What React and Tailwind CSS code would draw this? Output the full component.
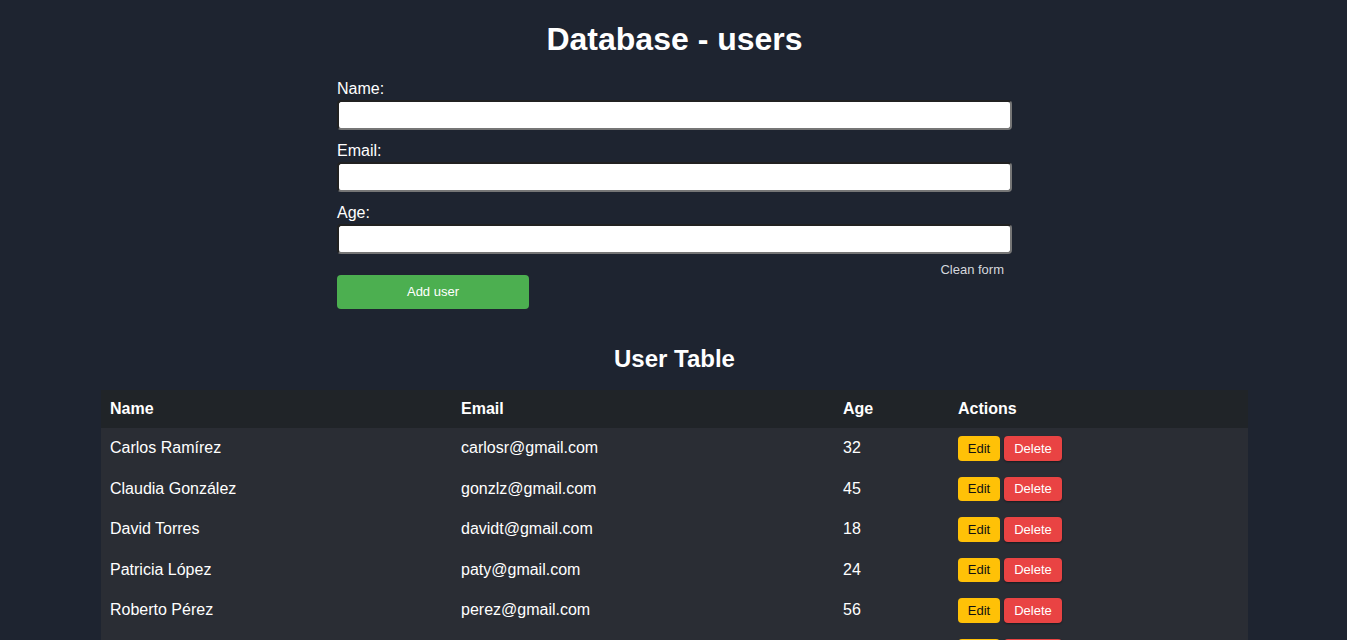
import { useState } from 'react';

const initialUsers = [
  { id: 1, name: 'Carlos Ramírez', email: 'carlosr@gmail.com', age: 32 },
  { id: 2, name: 'Claudia González', email: 'gonzlz@gmail.com', age: 45 },
  { id: 3, name: 'David Torres', email: 'davidt@gmail.com', age: 18 },
  { id: 4, name: 'Patricia López', email: 'paty@gmail.com', age: 24 },
  { id: 5, name: 'Roberto Pérez', email: 'perez@gmail.com', age: 56 },
  { id: 6, name: 'Laura Sánchez', email: 'lsanchez@gmail.com', age: 29 },
];

function Field({ label, value, onChange, type = 'text' }) {
  return (
    <div className="mt-[12px] first:mt-0">
      <label className="block text-[16px] leading-[18px] text-white">{label}</label>
      <input
        type={type}
        value={value}
        onChange={onChange}
        className="mt-[2px] block w-full h-[30px] px-2 rounded-[4px] bg-white text-black text-[14px] border-2 [border-style:inset] border-[#767676] focus:outline-none"
      />
    </div>
  );
}

export default function App() {
  const [users, setUsers] = useState(initialUsers);
  const [form, setForm] = useState({ name: '', email: '', age: '' });

  const clean = () => setForm({ name: '', email: '', age: '' });

  const handleSubmit = (e) => {
    e.preventDefault();
    if (!form.name.trim()) return;
    setUsers([...users, { id: Date.now(), name: form.name, email: form.email, age: form.age }]);
    clean();
  };

  return (
    <div className="min-h-screen bg-[#1e2430] text-white font-['Liberation_Sans',Arial,sans-serif] pt-[21px] pl-[2px] pb-10">
      <h1 className="text-center text-[32px] leading-[37px] font-bold">Database - users</h1>

      <form onSubmit={handleSubmit} className="w-[675px] mx-auto mt-[22px]">
        <Field label="Name:" value={form.name} onChange={(e) => setForm({ ...form, name: e.target.value })} />
        <Field label="Email:" value={form.email} onChange={(e) => setForm({ ...form, email: e.target.value })} />
        <Field label="Age:" type="number" value={form.age} onChange={(e) => setForm({ ...form, age: e.target.value })} />
        <div className="flex justify-end mt-[8px] pr-[8px]">
          <button type="button" onClick={clean} className="text-[13px] leading-[15px] text-[#d5d8dd]">
            Clean form
          </button>
        </div>
        <button type="submit" className="block -mt-[2px] w-[192px] h-[34px] rounded-[4px] bg-[#4caf50] text-white text-[13px]">
          Add user
        </button>
      </form>

      <h2 className="text-center text-[24px] leading-[28px] font-bold mt-[36px]">User Table</h2>

      <table className="w-[1147px] mx-auto mt-[17px] table-fixed border-collapse text-[16px]">
        <colgroup>
          <col className="w-[351px]" />
          <col className="w-[382px]" />
          <col className="w-[115px]" />
          <col />
        </colgroup>
        <thead>
          <tr className="bg-[#202428]">
            <th className="text-left font-bold px-[9px] py-[10px] leading-[18px]">Name</th>
            <th className="text-left font-bold px-[9px] py-[10px] leading-[18px]">Email</th>
            <th className="text-left font-bold px-[9px] py-[10px] leading-[18px]">Age</th>
            <th className="text-left font-bold px-[9px] py-[10px] leading-[18px]">Actions</th>
          </tr>
        </thead>
        <tbody className="bg-[#2a2d34]">
          {users.map((u) => (
            <tr key={u.id}>
              <td className="px-[9px] py-[8px] leading-[18px]">{u.name}</td>
              <td className="px-[9px] py-[8px] leading-[18px]">{u.email}</td>
              <td className="px-[9px] py-[8px] leading-[18px]">{u.age}</td>
              <td className="px-[9px] py-[8px]">
                <div className="flex gap-[4px]">
                  <button className="h-[24.5px] w-[42px] rounded-[4px] bg-[#ffc107] text-[#111] text-[13px]">Edit</button>
                  <button
                    onClick={() => setUsers(users.filter((x) => x.id !== u.id))}
                    className="h-[24.5px] w-[58px] rounded-[4px] bg-[#e94343] text-white text-[13px] shadow-[0_1px_2px_rgba(0,0,0,0.4)]"
                  >
                    Delete
                  </button>
                </div>
              </td>
            </tr>
          ))}
        </tbody>
      </table>
    </div>
  );
}
